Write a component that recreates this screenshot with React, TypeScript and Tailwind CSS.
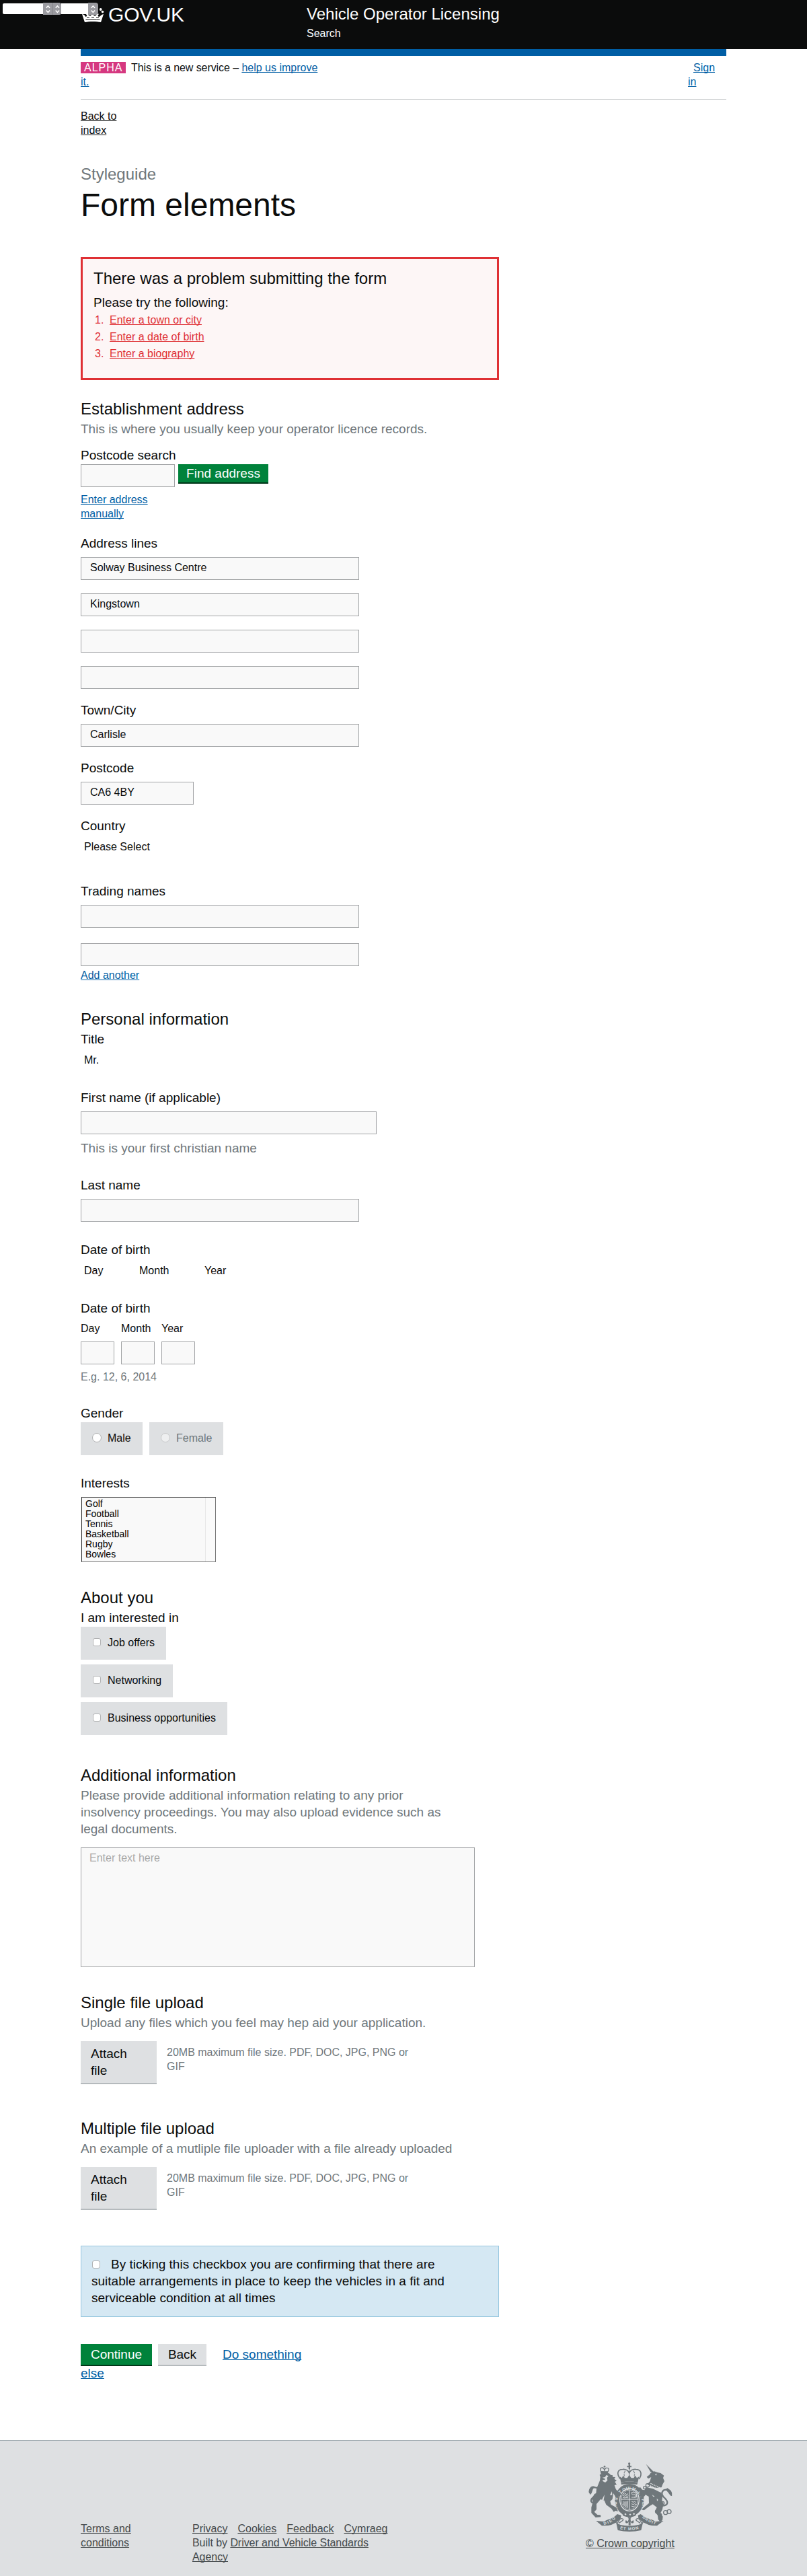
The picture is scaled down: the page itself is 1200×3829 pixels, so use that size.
import React from "react";

const underlined = "underline decoration-1 underline-offset-[1px] [text-decoration-skip-ink:none]";
const link = "text-[#005ea5] underline decoration-1 underline-offset-[1px] [text-decoration-skip-ink:none]";

function Label({ children, className = "" }: { children: React.ReactNode; className?: string }) {
  return <div className={`text-[19px] leading-[25px] ${className}`}>{children}</div>;
}

function Heading({ children, className = "" }: { children: React.ReactNode; className?: string }) {
  return <h2 className={`text-[24px] leading-[30px] ${className}`}>{children}</h2>;
}

function Hint({ children, className = "" }: { children: React.ReactNode; className?: string }) {
  return <p className={`text-[19px] leading-[25px] text-[#6f777b] ${className}`}>{children}</p>;
}

function Field({ value = "", className = "" }: { value?: string; className?: string }) {
  return (
    <input
      type="text"
      defaultValue={value}
      className={`block h-[34px] border border-[#a1a3a5] bg-[#f9f9f9] px-[13px] pb-[7px] pt-1 text-[16px] leading-[21px] ${className}`}
    />
  );
}

function Check({ radio = false, faded = false }: { radio?: boolean; faded?: boolean }) {
  return (
    <span
      className={`block border border-[#b0b1b2] bg-white ${radio ? "size-[14px] rounded-full" : "mx-px size-3 rounded-[3px]"} ${faded ? "opacity-50" : ""}`}
    />
  );
}

function Choice({ children, radio, disabled, width }: { children: React.ReactNode; radio?: boolean; disabled?: boolean; width: string }) {
  return (
    <div className={`flex h-[49px] items-center gap-[9px] bg-[#dee0e2] pb-[3px] pl-[17px] ${width} ${disabled ? "text-[#6f777b]" : ""}`}>
      <Check radio={radio} faded={disabled} />
      <span className="whitespace-nowrap text-[16px] leading-[21px]">{children}</span>
    </div>
  );
}

function Attach() {
  return (
    <div className="mt-[15px] flex h-16">
      <div className="w-[113px] border-b-2 border-[#b5babd] bg-[#dee0e2] pl-[15px] pr-6 pt-[6px] text-[19px] leading-[25px]">Attach file</div>
      <p className="ml-[15px] w-[380px] pt-[6px] text-[16px] leading-[21px] text-[#6f777b]">
        20MB maximum file size. PDF, DOC, JPG, PNG or
        <br />
        GIF
      </p>
    </div>
  );
}

function Spinner() {
  return (
    <svg className="shrink-0" width="15" height="17" viewBox="0 0 15 17" fill="none" stroke="#fff" strokeWidth="1.5">
      <path d="M4.7 6.8 7.4 3.9l2.7 2.9M4.7 10.4l2.7 2.9 2.7-2.9" />
    </svg>
  );
}

function Crown() {
  return (
    <svg className="block" width="36" height="24" viewBox="0 0 36 24" fill="#fff">
      <path d="M2 10c3 .2 4 2 5.800 4.300l1.600-2-1.600-2.600 3.600-.8.300 3 3.400.6 1.300-4-1.800-2.200h5.600l-1.800 2.200 1.300 4 3.400-.6.300-3 3.600.8-1.600 2.600 1.600 2C30.400 12 31.500 10.200 34 10l-4 12c-7-1.500-17-1.500-24 0z" />
      <circle cx="3.200" cy="6" r="1.900" /><circle cx="6.300" cy="2.700" r="1.800" /><circle cx="29.700" cy="3" r="1.900" /><circle cx="32.500" cy="6.500" r="1.800" />
      <circle cx="18" cy="2.500" r="2" />
      <g fill="none" stroke="#0b0c0c" strokeWidth="1"><path d="M7.500 18.500c7-1.200 14-1.200 21 0" /><path d="M9 15.500h4M16 15h4M23 15.500h4" /></g>
    </svg>
  );
}

function Arms() {
  return (
    <svg className="block" width="125" height="103" viewBox="45 58 375 309" fill="#6f777b">
      <defs>
        <path id="garter" d="M182 279A57 62 0 1 1 274 279" />
        <path id="dieu" d="M114 337Q148 331 170 305" />
        <path id="mon" d="M186 356Q229 367 272 354" />
        <path id="droit" d="M284 304Q310 326 346 337" />
      </defs>
      {/* royal crown */}
      <circle cx="227" cy="64" r="5" /><path d="M224 68h7v20h-7zM217 74h20v6h-20z" />
      <path fill="none" stroke="#6f777b" strokeWidth="5" d="M188 133C169 110 174 90 198 89c15-1 26 7 29 17 3-10 14-18 29-17 24 1 31 21 14 44" />
      <path fill="none" stroke="#6f777b" strokeWidth="4" strokeDasharray="4 3" d="M227 88v32M209 96c-6 9-5 17-3 26M246 96c6 9 5 17 3 26" />
      <path d="m185 122 9 6 6-11 7 11h11l9-13 9 13h11l7-11 7 11 10-6-6 25q-37-9-75 0z" />
      <path d="M190 148q37-10 75 0l-3 10q-35-8-70 0z" />
      {/* garter and quartered shield */}
      <ellipse cx="228" cy="226" rx="65" ry="72" />
      <ellipse cx="228" cy="225" rx="43" ry="50" fill="#6f777b" stroke="#dee0e2" strokeWidth="4" />
      <ellipse cx="228" cy="225" rx="37" ry="44" fill="none" stroke="#dee0e2" strokeWidth="2" />
      <path stroke="#dee0e2" strokeWidth="3" d="M228 182v87M190 223h76" />
      <g fill="none" stroke="#dee0e2" strokeWidth="3">
        <path d="m199 197 7 3 5-3 4 5 7-4M199 206l7 3 6-3 5 4 6-3M199 215l9 2 5-3 4 3 6-3M236 193h22M241 193c-6 8 0 11 8 9s9 8 0 12M259 197v17h-22M238 233l8 3 5-3 6 4M237 243l8 3 6-3 7 4M237 253l8 3 6-3M201 232c-3 12 3 21 18 28l2-30M207 233v17M213 232v22" />
      </g>
      <text fontFamily="Liberation Sans" fontSize="19" fontWeight="700" fill="#dee0e2"><textPath href="#garter" textLength="270">HONI SOIT QUI MAL Y PENSE</textPath></text>
      <path d="M193 284q34 18 69 0l-8 13q-26 10-53 0z" />
      <path fill="#dee0e2" d="m205 289 5-4 5 5-5 4zM226 291l5-4 5 4-5 4zM243 288l5-4 5 4-5 5z" />
      {/* lion */}
      <path fill="none" stroke="#6f777b" strokeWidth="4" d="M101 99c-5-12-5-16 5-17 8 0 10 7 11 14 0-7 3-14 11-13 9 0 9 7 4 17" />
      <circle cx="117" cy="77" r="4" /><path d="m99 97 35 1-3 9-29-2z" />
      <path d="M102 106q30-9 42 8l9 2 0 7 12 1-5 8 11 8-8 5 8 13-10 2 6 17 13 17 14 9-12 5-8 9-9-7-9-14-4 26-10 10 4 15 24 13 7 17-11-3-8 5-10-14-24-18-8-19-17-5-18 21 0 24-10 11 14 13 14 1 1 9-23 2-19-20 0-25 6-22-2-20 10-18 7-3 2-20 15-37 2-16-3-9 7-4-4-9 11-2 10 7-8 6-13-1z" />
      <path fill="#dee0e2" d="m107 126 12-2 6-9 9 4-6 8 2 12-10 9-10-5-2-7 9 1 3-5zM105 225l12-23-4 25zM141 204l9-17 1 17z" />
      <path fill="none" stroke="#6f777b" strokeWidth="7" d="M76 241c-33-2-19-24 2-34 25-17 16-38-9-37-17 2-20 14-18 25" />
      <path d="M47 187c3-17 10-25 26-22l-8 13-6 18-7 7z" />
      {/* unicorn */}
      <path d="m302 66 36 36-4 4-12-5z" />
      <path d="m322 106 16-8 14 5 15 3 15 11-4 11 6 14-8 14-5 14-27 2-17-6-20-9 12-14 6-19-13 7-7-8 13-10z" />
      <path d="m302 169 31 7 27 13 9 4 6 17-2 21 7 9-5 28-9 17 11 15-2 17-11 5-8-9-2-18-13-17 9-19-18-14-15 9-24 18-12-3 14-12 20-17-1-29-14-8-10 12-14-4 5-14-10-10-11 0 2-12 14-6 9 11 10 2z" />
      <path fill="none" stroke="#6f777b" strokeWidth="7" d="M370 252c35 1 31-20 15-35-22-20-10-37 8-37 18 1 24 14 20 27" />
      <path d="m398 173 14 12 6 24-10-6-9-12-11-12z" />
      <g fill="none" stroke="#6f777b" strokeWidth="4"><circle cx="309" cy="161" r="8" /><circle cx="296" cy="171" r="6" /><circle cx="352" cy="278" r="8" /><circle cx="364" cy="293" r="7" /><circle cx="389" cy="282" r="9" /><circle cx="405" cy="278" r="9" /><circle cx="376" cy="240" r="7" /></g>
      <path fill="none" stroke="#dee0e2" strokeWidth="4" strokeDasharray="5 3" d="m322 152 49 23M320 162l47 21" />
      <path fill="#dee0e2" d="m342 111 9-3-5 9zM329 203l12 7-7 2zM350 219l6 7-5 5z" />
      {/* motto ribbon */}
      <path d="m79 319 34 3 20-9q29-8 40-24l18 5-2 14q-22 27-56 32l-28 1z" />
      <path d="m380 319-34 3-20-9q-29-8-48-24l-12 5 2 14q26 27 60 32l23 1z" />
      <path d="m169 329 19 8q41 9 83-1l17-9-8 34q-52 12-104 0z" />
      <g fill="none" stroke="#6f777b" strokeWidth="4"><path d="M181 303c-20 11-18 20-8 28l12-18c5-7 19-4 14 4l-18 12M276 303c15 11 18 20 8 28l-11-18c-6-7-19-4-15 4l18 12" /></g>
      <path d="M224 304h9v35h-9zM212 316c-7 14 5 18 12 8M245 316c7 14-5 18-12 8M219 302h19l-4 6h-11zM228 308l7 12-7 11-7-11z" fill="#6f777b" />
      <g fontFamily="Liberation Sans" fontSize="18" fontWeight="700" fill="#dee0e2">
        <text><textPath href="#dieu" textLength="60">DIEU</textPath></text>
        <text><textPath href="#mon" textLength="84">ET MON</textPath></text>
        <text><textPath href="#droit" textLength="68">DROIT</textPath></text>
      </g>
    </svg>
  );
}

export default function App() {
  return (
    <div className="min-h-[3829px] bg-white font-['Liberation_Sans',Arial,sans-serif] text-[#0b0c0c] antialiased">
      <header className="relative h-[73px] bg-[#0b0c0c] text-white">
        <div className="absolute left-1 top-[4px] z-10 flex h-[18px] items-center">
          <span className="h-4 w-[60px] rounded-l-[2px] bg-white" />
          <span className="flex h-[18px] w-[15px] items-center border-r border-[#85858a] bg-[#9b9ba0]"><Spinner /></span>
          <span className="flex h-[18px] w-3 items-center justify-center overflow-hidden rounded-r-[3px] bg-[#9b9ba0]"><Spinner /></span>
          <span className="h-4 w-10 bg-white" />
          <span className="flex h-[18px] w-[15px] items-center rounded-r-[4px] bg-[#9b9ba0]"><Spinner /></span>
        </div>
        <div className="flex pl-[120px]">
          <div className="flex w-[336px] pt-[11px]">
            <Crown />
            <span className="-mt-[6px] ml-[5px] text-[30px] leading-[34px] tracking-[-0.2px]">GOV.UK</span>
          </div>
          <div className="pt-[6px]">
            <div className="text-[24px] leading-[30px]">Vehicle Operator Licensing</div>
            <div className="mt-[3px] text-[16px] leading-[21px]">Search</div>
          </div>
        </div>
      </header>

      <main className="mx-auto w-[960px]">
        <div className="h-[10px] bg-[#005ea5]" />
        <div className="flex h-[65px] justify-between border-b border-[#bfc1c3] pt-[7px] text-[16px] leading-[21px]">
          <p className="w-[380px]">
            <strong className="mr-2 inline-block h-[17px] w-[67px] bg-[#d53880] pl-[5px] font-normal leading-[17px] tracking-[1px] text-white">ALPHA</strong>
            <span className="tracking-[-0.08px]">This is a new service – </span>
            <a className={link}>help us improve<br />it.</a>
          </p>
          <p className="w-[57px]"><a className={`${link} ml-2`}>Sign</a><br /><a className={link}>in</a></p>
        </div>
        <a className={`mt-[14px] block w-16 text-[16px] leading-[21px] ${underlined}`}>Back to index</a>

        <p className="mt-[40px] text-[24px] leading-[30px] text-[#6f777b]">Styleguide</p>
        <h1 className="mt-[6px] text-[48px] leading-[50px]">Form elements</h1>

        <section className="mt-[52px] h-[183px] w-[622px] border-[3px] border-[#df3034] bg-[#fdf6f6] pl-4 pt-[14px]">
          <Heading>There was a problem submitting the form</Heading>
          <Label className="mt-2">Please try the following:</Label>
          <ol className="ml-[2px] mt-px text-[16px] leading-[25px] text-[#df3034]">
            {["Enter a town or city", "Enter a date of birth", "Enter a biography"].map((t, i) => (
              <li key={t} className="flex"><span className="w-[22px]">{i + 1}.</span><a className={underlined}>{t}</a></li>
            ))}
          </ol>
        </section>

        <Heading className="mt-7">Establishment address</Heading>
        <Hint className="mt-[2px]">This is where you usually keep your operator licence records.</Hint>
        <Label className="mt-[14px]">Postcode search</Label>
        <div className="mt-px flex h-[34px] gap-[5px]">
          <Field className="w-[140px]" />
          <button className="h-[29px] w-[134px] border-b-2 border-[#003618] bg-[#00823b] text-[19px] leading-[25px] text-white">Find address</button>
        </div>
        <a className={`mt-2 block w-[110px] text-[16px] leading-[21px] ${link}`}>Enter address manually</a>

        <Label className="mt-[21px]">Address lines</Label>
        <div className="mt-2 flex flex-col gap-5">
          <Field value="Solway Business Centre" className="w-[414px]" />
          <Field value="Kingstown" className="w-[414px]" />
          <Field className="w-[414px]" />
          <Field className="w-[414px]" />
        </div>
        <Label className="mt-[19px]">Town/City</Label>
        <Field value="Carlisle" className="mt-2 w-[414px]" />
        <Label className="mt-[19px]">Postcode</Label>
        <Field value="CA6 4BY" className="mt-2 w-[168px]" />
        <Label className="mt-[19px]">Country</Label>
        <div className="ml-[5px] mt-2 text-[16px] leading-[21px]">Please Select</div>

        <Label className="mt-[43px]">Trading names</Label>
        <Field className="mt-2 w-[414px]" />
        <Field className="mt-[23px] w-[414px]" />
        <a className={`mt-[3px] block text-[16px] leading-[21px] ${link}`}>Add another</a>

        <Heading className="mt-10">Personal information</Heading>
        <Label className="mt-[2px]">Title</Label>
        <div className="ml-[5px] mt-2 text-[16px] leading-[21px]">Mr.</div>
        <Label className="mt-[33px]">First name (if applicable)</Label>
        <Field className="mt-2 w-[440px]" />
        <Hint className="mt-2">This is your first christian name</Hint>
        <Label className="mt-[30px]">Last name</Label>
        <Field className="mt-2 w-[414px]" />

        <Label className="mt-[29px]">Date of birth</Label>
        <div className="ml-[5px] mt-2 flex text-[16px] leading-[21px]">
          <span className="w-[82px]">Day</span>
          <span className="w-[97px]">Month</span>
          <span>Year</span>
        </div>
        <Label className="mt-[33px]">Date of birth</Label>
        <div className="mt-[7px] flex gap-[10px] text-[16px] leading-[21px]">
          {["Day", "Month", "Year"].map((t) => (
            <label key={t} className="w-[50px]">{t}<Field className="mt-[9px] w-[50px]" /></label>
          ))}
        </div>
        <p className="mt-2 text-[16px] leading-[21px] text-[#6f777b]">E.g. 12, 6, 2014</p>

        <Label className="mt-[31px]">Gender</Label>
        <div className="mt-px flex gap-[10px]">
          <Choice radio width="w-[92px]">Male</Choice>
          <Choice radio disabled width="w-[110px]">Female</Choice>
        </div>

        <Label className="mt-[29px]">Interests</Label>
        <div className="ml-px mt-2 flex h-[97px] w-[200px] border border-b-[#767676] border-l-[#2a2a2a] border-r-[#767676] border-t-[#2a2a2a] bg-[#f9f9f9]">
          <ul className="flex-1 pl-[5px] pt-[2px] text-[14px] leading-[15px] text-black">
            {["Golf", "Football", "Tennis", "Basketball", "Rugby", "Bowles"].map((t) => <li key={t}>{t}</li>)}
          </ul>
          <div className="w-[15px] border-l border-[#e8e8e8] bg-[#fafafa]" />
        </div>

        <Heading className="mt-[38px]">About you</Heading>
        <Label className="mt-[2px]">I am interested in</Label>
        <div className="mt-px flex flex-col gap-[7px]">
          <Choice width="w-[127px]">Job offers</Choice>
          <Choice width="w-[137px]">Networking</Choice>
          <Choice width="w-[218px]">Business opportunities</Choice>
        </div>

        <Heading className="mt-[45px]">Additional information</Heading>
        <Hint className="mt-[2px] w-[560px]">Please provide additional information relating to any prior<br />insolvency proceedings. You may also upload evidence such as<br />legal documents.</Hint>
        <textarea
          placeholder="Enter text here"
          className="mt-[15px] block h-[178px] w-[586px] resize-none border border-[#a1a3a5] bg-[#f9f9f9] px-3 pt-1 text-[16px] leading-[21px] placeholder:text-[#a9a9a9]"
        />

        <Heading className="mt-[38px]">Single file upload</Heading>
        <Hint className="mt-[2px]">Upload any files which you feel may hep aid your application.</Hint>
        <Attach />

        <Heading className="mt-[51px]">Multiple file upload</Heading>
        <Hint className="mt-[2px]">An example of a mutliple file uploader with a file already uploaded</Hint>
        <Attach />

        <div className="mt-[53px] h-[106px] w-[622px] border border-[#95c6df] bg-[#d5e8f3] pl-[15px] pt-[14px] text-[19px] leading-[25px]">
          <span className="mr-[15px] inline-block"><Check /></span>By ticking this checkbox you are confirming that there are
          <br />
          suitable arrangements in place to keep the vehicles in a fit and
          <br />
          serviceable condition at all times
        </div>

        <div className="mt-10 flex h-[33px] text-[19px] leading-[25px]">
          <button className="w-[106px] border-b-2 border-[#003618] bg-[#00823b] text-white">Continue</button>
          <button className="ml-[9px] w-[72px] border-b-2 border-[#b5babd] bg-[#dee0e2]">Back</button>
          <a className={`ml-6 pt-[3px] ${link}`}>Do something</a>
        </div>
        <a className={`-mt-[2px] block text-[19px] leading-[25px] ${link}`}>else</a>
      </main>

      <footer className="mt-[87px] h-[202px] border-t border-[#a1acb2] bg-[#dee0e2] text-[16px] leading-[21px] text-[#454a4c]">
        <div className="mx-auto flex w-[960px]">
          <a className={`mt-[120px] w-[166px] ${underlined}`}>Terms and<br />conditions</a>
          <div className="mt-[120px] w-[465px]">
            <div className="flex gap-[15px]">
              {["Privacy", "Cookies", "Feedback", "Cymraeg"].map((t) => <a key={t} className={underlined}>{t}</a>)}
            </div>
            <p className="tracking-[-0.06px]">Built by <a className={underlined}>Driver and Vehicle Standards<br />Agency</a></p>
          </div>
          <div className="ml-[120px] mt-[32px]">
            <div className="ml-1"><Arms /></div>
            <a className={`mt-[7px] block whitespace-nowrap ${underlined}`}>© Crown copyright</a>
          </div>
        </div>
      </footer>
    </div>
  );
}
